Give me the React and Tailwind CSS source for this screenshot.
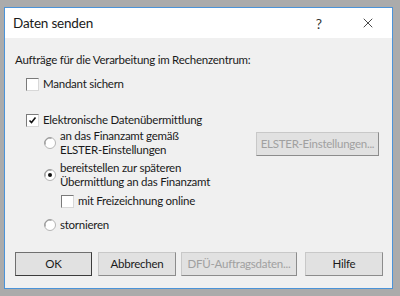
import { X } from 'lucide-react'

const FONT = { fontFamily: 'Lato, "Noto Sans", sans-serif' }

function CheckBox({ checked }) {
  return (
    <span className="w-[13px] h-[13px] shrink-0 bg-white border border-t-[#7a7a7a] border-l-[#7a7a7a] border-b-[#d8d8d8] border-r-[#d8d8d8] flex items-center justify-center">
      {checked && (
        <svg width="9" height="9" viewBox="0 0 9 9">
          <path d="M1.5 4.5 L3.5 6.5 L7.5 1.5" fill="none" stroke="#111" strokeWidth="1.6" />
        </svg>
      )}
    </span>
  )
}

function Radio({ checked }) {
  return (
    <svg width="12" height="12" viewBox="0 0 12 12" className="shrink-0">
      <circle cx="6" cy="6" r="5.5" fill="#fff" stroke="#b4b4b4" />
      <path d="M1.2 7.5 A5 5 0 0 1 7.5 1.2" fill="none" stroke="#8a8a8a" />
      {checked && <circle cx="6" cy="6" r="2" fill="#111" />}
    </svg>
  )
}

function Button({ children, disabled, primary, className = '' }) {
  return (
    <div
      className={`h-[24px] shrink-0 flex items-center justify-center whitespace-nowrap bg-[#e1e1e1] border ${
        primary
          ? 'border-[#6f6f6f] border-b-[#3c3c3c] border-r-[#3c3c3c]'
          : 'border-[#c8c8c8] border-b-[#8c8c8c] border-r-[#8c8c8c]'
      } ${disabled ? 'text-[#a0a0a0]' : 'text-[#1a1a1a]'} ${className}`}
    >
      {children}
    </div>
  )
}

export default function App() {
  return (
    <div className="w-[400px] h-[296px] bg-[#ababab] pt-[7px] pl-[4px]" style={FONT}>
      <div className="w-[389px] h-[282px] border border-[#4b93d8] bg-[#f0f0f0] flex flex-col">
        {/* title bar */}
        <div className="h-[30px] bg-white flex items-center pl-[8px] pr-[16px]">
          <span className="text-[13.5px] tracking-[-0.2px] text-[#1a1a1a]">Daten senden</span>
          <span className="ml-auto text-[14px] text-[#333] mr-[38px]">?</span>
          <X size={16} strokeWidth={1.2} className="text-[#1a1a1a]" />
        </div>

        <div className="flex flex-col pl-[10px] text-[11.5px] tracking-[-0.25px] text-[#1a1a1a] leading-[14px] whitespace-nowrap">
          <p className="mt-[15px]">Aufträge für die Verarbeitung im Rechenzentrum:</p>

          <div className="flex items-center gap-[4px] ml-[11px] mt-[10px]">
            <CheckBox />
            <span>Mandant sichern</span>
          </div>

          <div className="flex items-center gap-[4px] ml-[11px] mt-[22px]">
            <CheckBox checked />
            <span>Elektronische Datenübermittlung</span>
          </div>

          <div className="flex items-center ml-[29px] mt-[2px] pr-[13px]">
            <Radio />
            <span className="ml-[4px]">an das Finanzamt gemäß<br />ELSTER-Einstellungen</span>
            <Button disabled className="ml-auto w-[123px] mt-[1px]">ELSTER-Einstellungen...</Button>
          </div>

          <div className="flex items-center ml-[29px] mt-[4px]">
            <Radio checked />
            <span className="ml-[4px]">bereitstellen zur späteren<br />Übermittlung an das Finanzamt</span>
          </div>

          <div className="flex items-center gap-[4px] ml-[46px] mt-[5px]">
            <CheckBox />
            <span>mit Freizeichnung online</span>
          </div>

          <div className="flex items-center ml-[29px] mt-[10px]">
            <Radio />
            <span className="ml-[4px]">stornieren</span>
          </div>

          <div className="flex items-center mt-[20px]">
            <Button primary className="w-[77px]">OK</Button>
            <Button className="w-[78px] ml-[6px]">Abbrechen</Button>
            <Button disabled className="w-[116px] ml-[5px]">DFÜ-Auftragsdaten...</Button>
            <Button className="w-[78px] ml-[8px]">Hilfe</Button>
          </div>
        </div>
      </div>
    </div>
  )
}
